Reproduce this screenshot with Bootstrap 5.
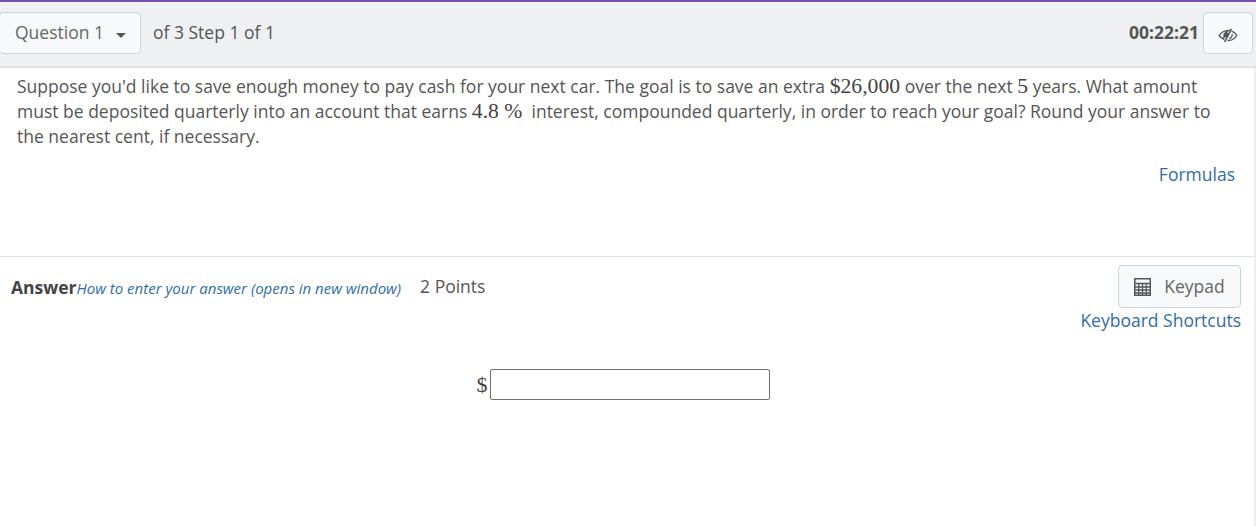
<!DOCTYPE html>
<html lang="en">
<head>
<meta charset="utf-8">
<title>Question</title>
<link href="https://cdn.jsdelivr.net/npm/bootstrap@5.3.0/dist/css/bootstrap.min.css" rel="stylesheet">
<style>
html, body { height: 100%; }
body { font-family: "Open Sans", sans-serif; font-size: 17.5px; color: #555; background: #fff; overflow: hidden; }
.topstrip { height: 2px; background: #7a4fa8; }
.toolbar { height: 66px; background: #eff0f1; border-bottom: 2px solid #e2e2e2; padding-top: 10px; }
.tool-btn { background: #f7f9fb; border: 1px solid #c5d5df; border-radius: 4px; color: #666; font-size: 17.5px; height: 42px; padding: 0 14px; line-height: 38px; }
.q-btn { width: 142px; margin-left: -1px; text-align: left; padding: 0 0 2px 15px; }
.q-caret { display: inline-block; width: 0; height: 0; border-left: 5px solid transparent; border-right: 5px solid transparent; border-top: 5px solid #555; margin-left: 12px; vertical-align: 1px; }
.q-of { margin-left: 12px; line-height: 40px; }
.timer { font-weight: 700; color: #555; line-height: 40px; margin-right: 4px; }
.eye-btn { width: 50px; padding: 0; margin-right: 3px; }
.content { border-right: 2px solid #eee; height: 458px; }
.stem { padding: 6px 20px 0 17px; line-height: 25px; height: 189px; border-bottom: 1px solid #e2e2e2; }
.mathy { font-family: "Liberation Serif", serif; font-size: 21.7px; color: #444; line-height: 0; }
.plain-link { color: #2f6da8; text-decoration: none; }
.formulas { margin: 13px -1px 0 0; text-align: right; }
.answer-row { padding: 8px 13px 0 11px; }
.ans-title { font-weight: 700; color: #444; line-height: 45px; }
.ans-help { font-size: 15px; font-style: italic; }
.ans-points { margin-left: 19px; position: relative; top: -1px; }
.key-btn { width: 123px; height: 43px; padding: 0; line-height: 41px; display: inline-flex; align-items: center; justify-content: center; gap: 13px; }
.key-link { line-height: 25px; }
.entry { margin-top: 36px; padding-right: 8px; }
.dollar { font-family: "Liberation Serif", serif; font-size: 22px; color: #444; margin-right: 2px; line-height: 30px; }
.ans-input { width: 280px; height: 31px; border: 1px solid #6f6f6f; border-radius: 2px; background: #fff; outline: none; padding: 0 4px; }
</style>
</head>
<body>
<div class="topstrip"></div>
<div class="toolbar d-flex justify-content-between">
  <div class="d-flex">
    <button type="button" class="tool-btn q-btn">Question 1<span class="q-caret"></span></button>
    <span class="q-of">of 3 Step 1 of 1</span>
  </div>
  <div class="d-flex">
    <span class="timer">00:22:21</span>
    <button type="button" class="tool-btn eye-btn" aria-label="Hide timer">
      <svg width="20" height="15" viewBox="0 0 20 15" fill="none">
        <path d="M1.2 7.5C3 4.6 6 2.6 10.5 2.4C8 4 6 8 5.6 11.2C3.8 10.4 2.3 9.1 1.2 7.5Z" stroke="#555" stroke-width="1.4"/>
        <circle cx="8" cy="6.8" r="2.6" fill="#555"/>
        <path d="M13.6 3.2C15.8 4 17.6 5.5 18.8 7.5C17 10.4 13.6 12.6 9.6 12.5" stroke="#555" stroke-width="1.3"/>
        <path d="M14.2 6C14.4 8.2 13 10 11 10.7" stroke="#555" stroke-width="1.2"/>
        <path d="M13.4 .8L6.6 14" stroke="#555" stroke-width="1.6"/>
      </svg>
    </button>
  </div>
</div>
<div class="content">
  <div class="stem">
    <div>Suppose you'd like to save enough money to pay cash for your next car. The goal is to save an extra <span class="mathy">$26,000</span> over the next <span class="mathy">5</span> years. What amount must be deposited quarterly into an account that earns <span class="mathy">4.8 %</span>&nbsp; interest, compounded quarterly, in order to reach your goal? Round your answer to the nearest cent, if necessary.</div>
    <div class="formulas"><a class="plain-link" href="#">Formulas</a></div>
  </div>
  <div class="answer-row d-flex justify-content-between">
    <div>
      <span class="ans-title">Answer</span><a class="plain-link ans-help" href="#">How to enter your answer (opens in new window)</a><span class="ans-points">2 Points</span>
    </div>
    <div class="d-flex flex-column align-items-end">
      <button type="button" class="tool-btn key-btn">
        <svg width="17" height="18" viewBox="0 0 17 18" fill="none">
          <rect x=".75" y=".75" width="15.5" height="16.5" fill="#f7f9fb" stroke="#555" stroke-width="1.5"/>
          <path d="M1 5.5H16" stroke="#555" stroke-width="1.5"/>
          <path d="M1 9H16M1 12H16M1 15H16M4.75 6V17M8.5 6V17M12.25 6V17" stroke="#555" stroke-width="1.3"/>
        </svg>
        <span>Keypad</span>
      </button>
      <a class="plain-link key-link" href="#">Keyboard Shortcuts</a>
    </div>
  </div>
  <div class="entry d-flex justify-content-center align-items-center">
    <span class="dollar">$</span><input class="ans-input" type="text" aria-label="Answer">
  </div>
</div>
<script src="https://cdn.jsdelivr.net/npm/bootstrap@5.3.0/dist/js/bootstrap.bundle.min.js"></script>
</body>
</html>
